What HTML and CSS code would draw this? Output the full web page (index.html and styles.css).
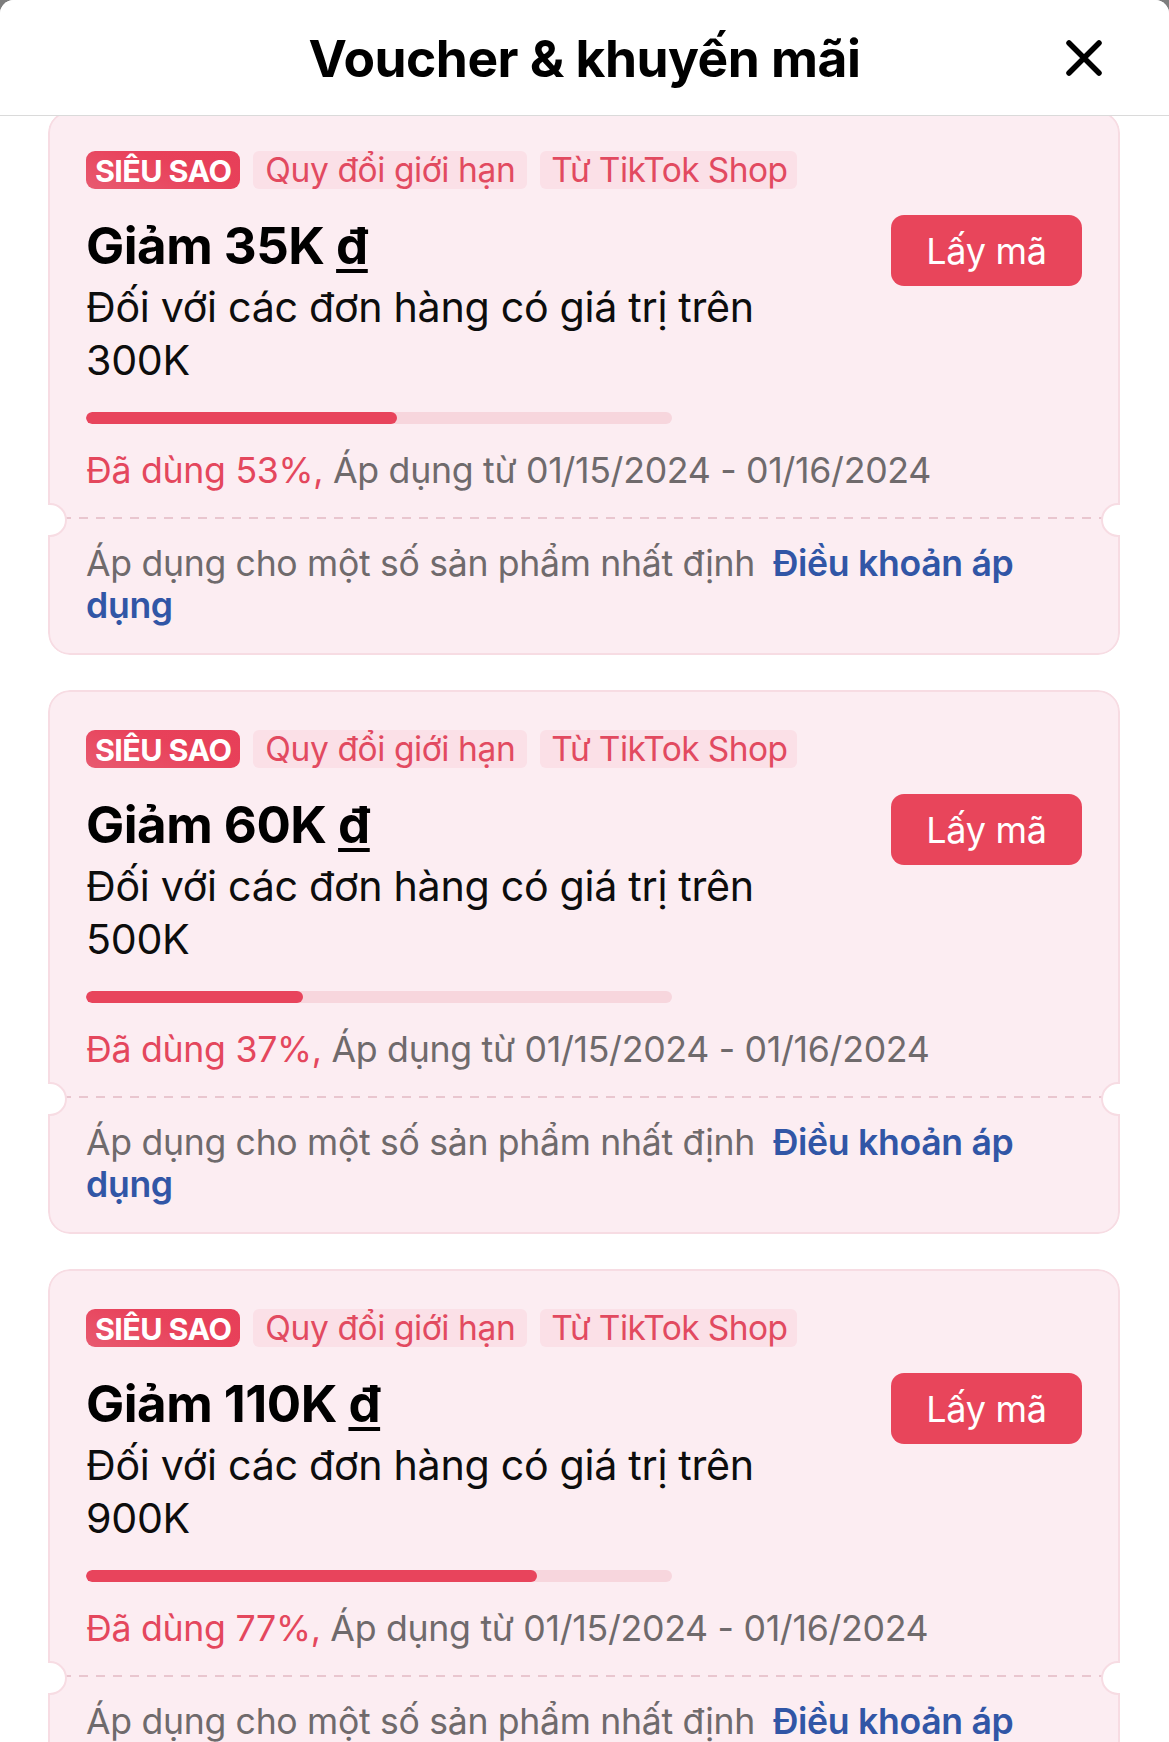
FILE: index.html
```html
<!DOCTYPE html>
<html lang="vi">
<head>
<meta charset="utf-8">
<title>Voucher &amp; khuyến mãi</title>
<link rel="stylesheet" href="styles.css">
</head>
<body>
<div class="sheet">
  <header class="header">
    <span></span>
    <h1 class="title">Voucher &amp; khuyến mãi</h1>
    <button class="close" aria-label="Đóng">
      <svg width="36" height="36" viewBox="0 0 36 36"><path d="M3 3 L33 33 M33 3 L3 33" stroke="#000" stroke-width="5.5" stroke-linecap="round" fill="none"/></svg>
    </button>
  </header>

  <main class="list">
    <section class="card">
      <div class="top">
        <div class="info">
          <div class="tags"><span class="badge">SIÊU SAO</span><span class="tag">Quy đổi giới hạn</span><span class="tag">Từ TikTok Shop</span></div>
          <h2 class="amount">Giảm 35K <u>đ</u></h2>
          <p class="desc">Đối với các đơn hàng có giá trị trên 300K</p>
          <div class="bar"><div class="fill" style="width:53%"></div></div>
        </div>
        <button class="get">Lấy mã</button>
      </div>
      <p class="usage"><span class="used">Đã dùng 53%,</span> Áp dụng từ 01/15/2024 - 01/16/2024</p>
      <div class="divider"></div>
      <p class="foot">Áp dụng cho một số sản phẩm nhất định <a class="terms">Điều khoản áp dụng</a></p>
    </section>

    <section class="card">
      <div class="top">
        <div class="info">
          <div class="tags"><span class="badge">SIÊU SAO</span><span class="tag">Quy đổi giới hạn</span><span class="tag">Từ TikTok Shop</span></div>
          <h2 class="amount">Giảm 60K <u>đ</u></h2>
          <p class="desc">Đối với các đơn hàng có giá trị trên 500K</p>
          <div class="bar"><div class="fill" style="width:37%"></div></div>
        </div>
        <button class="get">Lấy mã</button>
      </div>
      <p class="usage"><span class="used">Đã dùng 37%,</span> Áp dụng từ 01/15/2024 - 01/16/2024</p>
      <div class="divider"></div>
      <p class="foot">Áp dụng cho một số sản phẩm nhất định <a class="terms">Điều khoản áp dụng</a></p>
    </section>

    <section class="card">
      <div class="top">
        <div class="info">
          <div class="tags"><span class="badge">SIÊU SAO</span><span class="tag">Quy đổi giới hạn</span><span class="tag">Từ TikTok Shop</span></div>
          <h2 class="amount">Giảm 110K <u>đ</u></h2>
          <p class="desc">Đối với các đơn hàng có giá trị trên 900K</p>
          <div class="bar"><div class="fill" style="width:77%"></div></div>
        </div>
        <button class="get">Lấy mã</button>
      </div>
      <p class="usage"><span class="used">Đã dùng 77%,</span> Áp dụng từ 01/15/2024 - 01/16/2024</p>
      <div class="divider"></div>
      <p class="foot">Áp dụng cho một số sản phẩm nhất định <a class="terms">Điều khoản áp dụng</a></p>
    </section>
  </main>
</div>
</body>
</html>
```

FILE: styles.css
```css
* { box-sizing: border-box; }
html, body { margin: 0; padding: 0; }
body {
  background: #7d7d7d;
  font-family: Inter, "Noto Sans", "Liberation Sans", sans-serif;
  color: #000;
  overflow: hidden;
}
.sheet {
  background: #fff;
  border-radius: 14px 14px 0 0;
  min-height: 100vh;
  overflow: hidden;
}
.header {
  position: relative;
  z-index: 2;
  height: 116px;
  background: #fff;
  border-bottom: 1.5px solid #dadada;
  display: grid;
  grid-template-columns: 1fr auto 1fr;
  align-items: center;
}
.title {
  margin: 0;
  font-size: 51.5px;
  font-weight: 700;
  letter-spacing: -0.5px;
}
.close {
  justify-self: end;
  margin-right: 67px;
  border: 0;
  background: none;
  padding: 0;
  width: 36px;
  height: 36px;
  display: flex;
}
.list {
  margin-top: -5px;
  padding: 0 49px 0 48px;
  display: flex;
  flex-direction: column;
  gap: 35px;
}
.card {
  position: relative;
  background: #fcedf2;
  border: 2px solid #f7dce3;
  border-radius: 22px;
  padding: 38px 36px 26px 36px;
  clip-path: inset(0 round 22px);
}
.top {
  display: flex;
  align-items: flex-start;
  gap: 70px;
}
.info { flex: 1; min-width: 0; }
.tags { display: flex; gap: 13px; height: 38px; }
.badge {
  display: flex; align-items: center;
  height: 38px;
  padding: 0 9px;
  border-radius: 9px;
  background: linear-gradient(20deg, #e85a70 0%, #e8415a 60%, #e63f58 100%);
  color: #fff;
  font-weight: 700;
  font-size: 30.5px;
  letter-spacing: -0.6px;
}
.tag {
  display: flex; align-items: center;
  height: 38px;
  padding: 0 12px;
  border-radius: 6px;
  background: #fbe0e7;
  color: #e24a60;
  font-size: 33.5px;
  letter-spacing: -0.4px;
}
.tag + .tag { padding: 0 10px 0 11px; letter-spacing: -0.6px; }
.amount {
  margin: 27px 0 0;
  font-size: 51px;
  line-height: 60px;
  font-weight: 700;
  letter-spacing: -0.5px;
}
.amount u {
  text-decoration-thickness: 4px;
  text-underline-offset: 5px;
}
.desc {
  margin: 5px 0 0;
  font-size: 41.2px;
  line-height: 53px;
  color: #0d0d0d;
  letter-spacing: -0.3px;
}
.bar {
  margin-top: 25px;
  width: 586px;
  height: 12px;
  border-radius: 6px;
  background: #f7d6dd;
  overflow: hidden;
}
.fill { height: 100%; border-radius: 6px; background: #e8445c; }
.get {
  flex: none;
  margin-top: 64px;
  width: 191px;
  height: 71px;
  border: 0;
  border-radius: 13px;
  background: #e8455b;
  color: #fff;
  font-family: inherit;
  font-size: 36px;
  letter-spacing: -0.3px;
}
.usage {
  margin: 20px 0 0;
  font-size: 35.7px;
  line-height: 53px;
  color: #6f6a6c;
  letter-spacing: -0.3px;
  white-space: nowrap;
}
.used { color: #e4475d; }
.divider {
  position: relative;
  margin: 20px -24px 0;
  height: 2px;
  background: repeating-linear-gradient(to right, #e9c6cf 0 9px, transparent 9px 17px);
}
.divider::before, .divider::after {
  content: "";
  position: absolute;
  top: -14px;
  width: 30px;
  height: 30px;
  border-radius: 50%;
  background: #fff;
  border: 2px solid #f7dce3;
}
.divider::before { left: -29px; }
.divider::after { right: -29px; }
.foot {
  margin: 24px 0 0;
  font-size: 35.6px;
  line-height: 42px;
  color: #6f6a6c;
  letter-spacing: -0.3px;
}
.terms { color: #3156a6; font-weight: 600; margin-left: 8px; }
```
